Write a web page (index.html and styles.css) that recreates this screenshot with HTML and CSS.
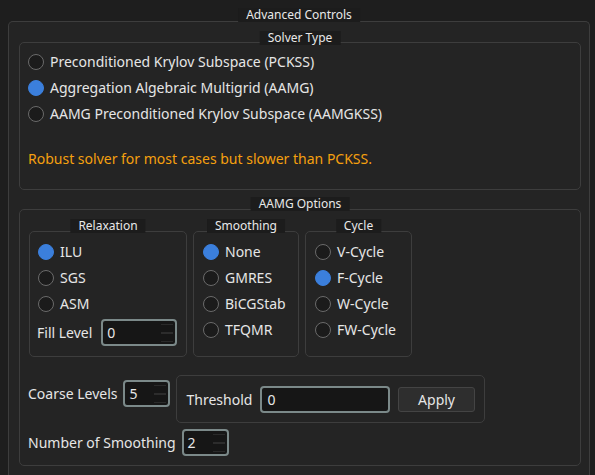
FILE: index.html
```html
<!DOCTYPE html>
<html lang="en">
<head>
  <meta charset="UTF-8" />
  <title>Advanced Controls</title>
  <link rel="stylesheet" href="styles.css">
</head>
<body>
  <div class="group outer">
    <div class="title">Advanced Controls</div>

    <div class="group solver">
      <div class="title">Solver Type</div>
      <label class="radio"><span class="dot"></span>Preconditioned Krylov Subspace (PCKSS)</label>
      <label class="radio"><span class="dot on"></span>Aggregation Algebraic Multigrid (AAMG)</label>
      <label class="radio"><span class="dot"></span>AAMG Preconditioned Krylov Subspace (AAMGKSS)</label>
      <p class="hint">Robust solver for most cases but slower than PCKSS.</p>
    </div>

    <div class="group aamg">
      <div class="title">AAMG Options</div>
      <div class="subs">
        <div class="group sub relax">
          <div class="title">Relaxation</div>
          <label class="radio"><span class="dot on"></span>ILU</label>
          <label class="radio"><span class="dot"></span>SGS</label>
          <label class="radio"><span class="dot"></span>ASM</label>
          <div class="field fill">
            <span>Fill Level</span>
            <div class="spin wide">0<i></i></div>
          </div>
        </div>
        <div class="group sub smooth">
          <div class="title">Smoothing</div>
          <label class="radio"><span class="dot on"></span>None</label>
          <label class="radio"><span class="dot"></span>GMRES</label>
          <label class="radio"><span class="dot"></span>BiCGStab</label>
          <label class="radio"><span class="dot"></span>TFQMR</label>
        </div>
        <div class="group sub cycle">
          <div class="title">Cycle</div>
          <label class="radio"><span class="dot"></span>V-Cycle</label>
          <label class="radio"><span class="dot on"></span>F-Cycle</label>
          <label class="radio"><span class="dot"></span>W-Cycle</label>
          <label class="radio"><span class="dot"></span>FW-Cycle</label>
        </div>
      </div>

      <div class="coarse-row">
        <div class="field coarse">
          <span>Coarse Levels</span>
          <div class="spin">5<i></i></div>
        </div>
        <div class="thresh">
          <span>Threshold</span>
          <div class="text-input">0</div>
          <button>Apply</button>
        </div>
      </div>

      <div class="field nsmooth">
        <span>Number of Smoothing</span>
        <div class="spin">2<i></i></div>
      </div>
    </div>
  </div>
</body>
</html>
```

FILE: styles.css
```css
body {
  margin: 0;
  height: 475px;
  overflow: hidden;
  box-sizing: border-box;
  background-color: #1e1e1e;
  font-family: "Noto Sans", "Open Sans", sans-serif;
  font-size: 14px;
  color: #e6e6e6;
  padding: 21px 0 0 8px;
}
.group {
  position: relative;
  border: 1px solid #3d3d3d;
  border-radius: 5px;
  background-color: #242424;
}
.title {
  position: absolute;
  top: -13px;
  left: 50%;
  transform: translateX(-50%);
  background-color: #1c1c1c;
  font-size: 12px;
  line-height: 14px;
  padding: 0 8px;
  white-space: nowrap;
  color: #e8e8e8;
}
/* the outer box runs on past the bottom of the window */
.outer {
  width: 582px;
  height: 454px;
  padding: 20px 0 0 10px;
  box-sizing: border-box;
  border-bottom: none;
  border-radius: 5px 5px 0 0;
}
.outer > .title {
  top: -14px;
}
.solver {
  width: 562px;
  box-sizing: border-box;
  padding: 6px 0 20px 8px;
}
.solver > .title {
  top: -12px;
}
.radio {
  display: flex;
  align-items: center;
  height: 26px;
  line-height: 26px;
  white-space: nowrap;
}
.dot {
  width: 14px;
  height: 14px;
  border: 1px solid #6a6a6a;
  border-radius: 50%;
  background-color: #1b1b1b;
  margin-right: 6px;
  flex-shrink: 0;
}
.dot.on {
  background-color: #3b7fdc;
  border-color: #3b7fdc;
}
.hint {
  margin: 22px 0 0;
  line-height: 20px;
  color: #f5a00f;
}
.aamg {
  width: 562px;
  box-sizing: border-box;
  margin-top: 19px;
  padding: 21px 0 9px 8px;
}
.aamg > .title {
  top: -13px;
}
.subs {
  display: flex;
  gap: 6px;
  margin-left: 1px;
}
.sub {
  height: 126px;
  box-sizing: border-box;
  padding: 7px 0 0 8px;
}
.sub > .title {
  top: -13px;
}
.relax { width: 158px; padding-left: 8px; }
.smooth { width: 106px; padding-left: 9px; }
.cycle { width: 107px; padding-left: 9px; }
.field {
  display: flex;
  align-items: center;
  gap: 6px;
}
.fill {
  gap: 9px;
  margin-top: 2px;
  margin-left: -1px;
}
.spin {
  position: relative;
  width: 47px;
  height: 27px;
  box-sizing: border-box;
  border: 2px solid #7b8989;
  border-radius: 4px;
  background-color: #161616;
  padding-left: 4px;
  line-height: 23px;
}
.spin.wide { width: 76px; }
.spin i {
  position: absolute;
  right: 2px;
  top: 3px;
  width: 12px;
  height: 16px;
  border-top: 1px solid #2a2a2a;
  border-bottom: 1px solid #2a2a2a;
  background: linear-gradient(#161616 45%, #2c2c2c 45%, #2c2c2c 55%, #161616 55%);
}
.coarse-row {
  display: flex;
  align-items: flex-start;
  gap: 6px;
  margin-top: 18px;
}
.coarse {
  margin-top: 5px;
}
.thresh {
  display: flex;
  align-items: center;
  width: 309px;
  height: 48px;
  box-sizing: border-box;
  border: 1px solid #3d3d3d;
  border-radius: 5px;
  padding: 0 9px;
}
.text-input {
  width: 131px;
  height: 27px;
  box-sizing: border-box;
  border: 2px solid #7b8989;
  border-radius: 4px;
  background-color: #161616;
  padding-left: 5px;
  line-height: 23px;
  margin-left: 8px;
}
button {
  width: 79px;
  height: 25px;
  margin-left: 8px;
  background-color: #2e2e2e;
  border: 1px solid #444;
  border-radius: 3px;
  color: #e6e6e6;
  font-family: inherit;
  font-size: 14px;
  padding: 0;
}
.nsmooth {
  margin-top: 6px;
}
```
